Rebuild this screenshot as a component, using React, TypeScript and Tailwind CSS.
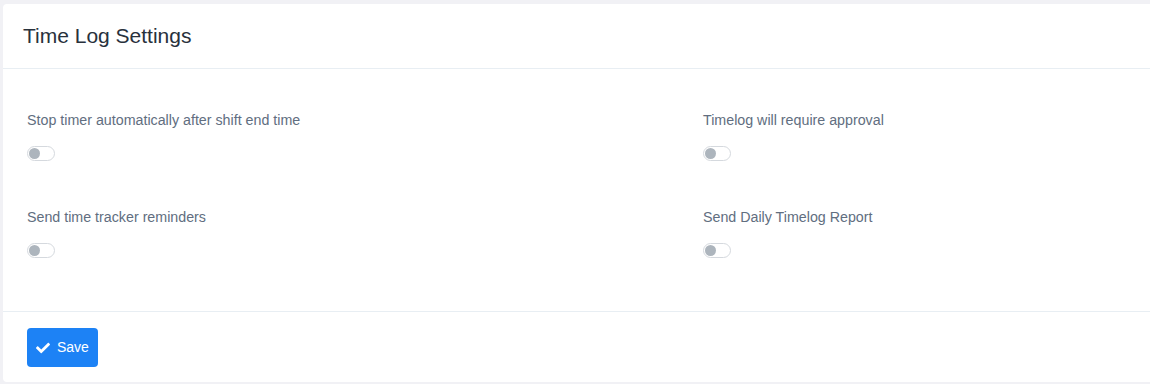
import { FaCheck } from "react-icons/fa";

const SETTINGS = [
  { label: "Stop timer automatically after shift end time" },
  { label: "Timelog will require approval" },
  { label: "Send time tracker reminders" },
  { label: "Send Daily Timelog Report" },
];

function Toggle() {
  return (
    <div className="w-[28px] h-[15px] rounded-full border border-[#d5d9de] bg-white flex items-center px-[1px]">
      <div className="w-[11px] h-[11px] rounded-full bg-[#adb5bd]" />
    </div>
  );
}

export default function App() {
  return (
    <div
      className="min-h-screen bg-[#f1f1f5] overflow-hidden pt-[4px] pl-[3px]"
      style={{ fontFamily: '"Liberation Sans", Arial, sans-serif' }}
    >
      <div className="w-[1160px] bg-white rounded-[4px]">
        <div className="h-[65px] px-[20px] flex items-center border-b border-[#e8eef3]">
          <h1 className="text-[21px] text-[#28313c]">Time Log Settings</h1>
        </div>

        <div className="grid grid-cols-[676px_676px] gap-y-[46px] pl-[24px] pt-[41px] pb-[53px]">
          {SETTINGS.map((s) => (
            <div key={s.label} className="flex flex-col">
              <span className="text-[14.25px] leading-[21px] text-[#616e80]">{s.label}</span>
              <div className="mt-[15px]">
                <Toggle />
              </div>
            </div>
          ))}
        </div>

        <div className="border-t border-[#e8eef3] pl-[24px] pt-[16px] pb-[15px]">
          <button className="h-[39px] pl-[9px] pr-[9px] flex items-center gap-[7px] rounded-[4px] bg-[#1d82f5] text-white text-[14px]">
            <FaCheck className="w-[14px] h-[14px]" />
            <span>Save</span>
          </button>
        </div>
      </div>
    </div>
  );
}
